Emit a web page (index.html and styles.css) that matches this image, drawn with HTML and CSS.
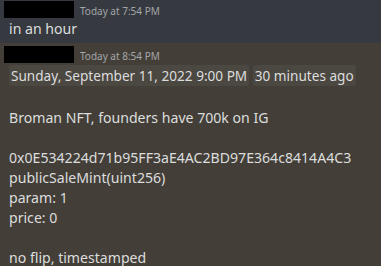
FILE: index.html
```html
<!DOCTYPE html>
<html lang="en">
<head>
    <meta charset="UTF-8">
    <title>Messages</title>
    <link rel="stylesheet" href="styles.css">
</head>
<body>
    <div class="message">
        <div class="header">
            <div class="name-block"></div>
            <span class="time">Today at 7:54 PM</span>
        </div>
        <div class="content">in an hour</div>
    </div>
    <div class="message highlight">
        <div class="header">
            <div class="name-block"></div>
            <span class="time">Today at 8:54 PM</span>
        </div>
        <div class="content">
            <div class="stamp-line"><span class="stamp">Sunday, September 11, 2022 9:00 PM</span> <span class="stamp">30 minutes ago</span></div>
            <div class="line blank"></div>
            <div class="line">Broman NFT, founders have 700k on IG</div>
            <div class="line blank"></div>
            <div class="line">0x0E534224d71b95FF3aE4AC2BD97E364c8414A4C3</div>
            <div class="line">publicSaleMint(uint256)</div>
            <div class="line">param: 1</div>
            <div class="line">price: 0</div>
            <div class="line blank"></div>
            <div class="line">no flip, timestamped</div>
        </div>
    </div>
</body>
</html>
```
FILE: styles.css
```css
body {
    margin: 0;
    padding: 0;
    background-color: #36393f;
    font-family: "Noto Sans", sans-serif;
    color: #dcddde;
    width: 381px;
    height: 266px;
    overflow: hidden;
}
.message {
    padding: 1px 0 4px 4px;
}
.highlight {
    background-color: #433f38;
    padding-top: 3px;
}
.header {
    display: flex;
    align-items: center;
    gap: 6px;
}
.name-block {
    width: 70px;
    height: 17px;
    background-color: #000;
}
.time {
    font-size: 10px;
    color: #a3a6aa;
    margin-top: 2px;
}
.content {
    font-size: 14.1px;
    line-height: 20px;
    padding-left: 5px;
    margin-top: 1px;
}
.stamp-line {
    padding-top: 2px;
    height: 22px;
    white-space: nowrap;
    font-size: 13.6px;
}
.stamp {
    background-color: #4b4741;
    border-radius: 3px;
    padding: 1px 2px;
}
.line {
    height: 20px;
}
```
